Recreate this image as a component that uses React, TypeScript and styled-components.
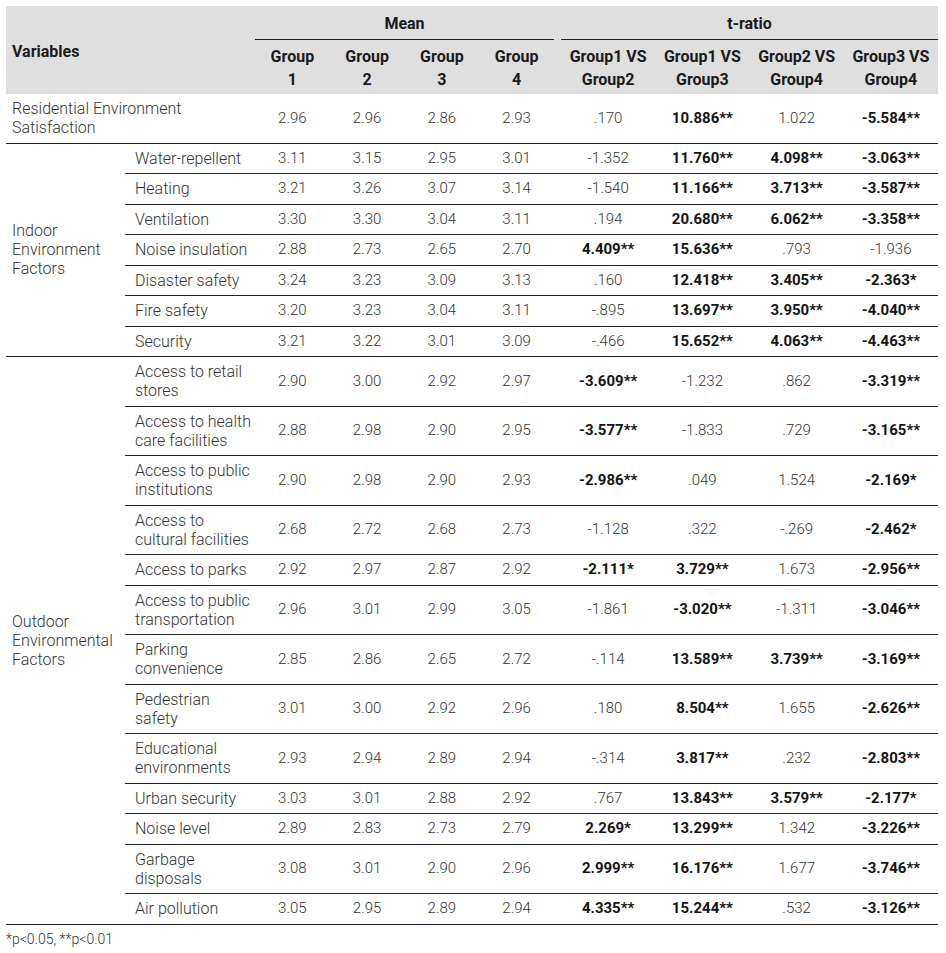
import React from 'react';
import styled, { createGlobalStyle } from 'styled-components';

const Global = createGlobalStyle`
  html, body { margin: 0; padding: 0; background: #ffffff; }
  body { font-family: Roboto, "Noto Sans", Arial, sans-serif; }
`;

const Page = styled.div`
  padding: 6px 0 0 6px;
  width: 932px;
`;

const Table = styled.table`
  border-collapse: collapse;
  table-layout: fixed;
  width: 932px;
  font-family: Roboto, "Noto Sans", Arial, sans-serif;
  font-size: 15px;
  color: #333333;
`;

const Col = styled.col<{ $w: number }>`
  width: ${p => p.$w}px;
`;

const HeadCell = styled.th<{ $left?: boolean }>`
  background: #dfdfdf;
  color: #1a1a1a;
  font-weight: 700;
  font-size: 16px;
  line-height: 23px;
  padding: 5px 2px 3px;
  text-align: ${p => (p.$left ? 'left' : 'center')};
  padding-left: ${p => (p.$left ? '6px' : '2px')};
  vertical-align: middle;
`;

const SpanTitle = styled(HeadCell)`
  padding: 6px 2px 4px;
  line-height: 23px;
  border-bottom: 1px solid #222222;
`;

const GapHead = styled.th`
  background: #dfdfdf;
  padding: 0;
`;

const Cell = styled.td<{ $bold?: boolean }>`
  padding: 5.25px 2px;
  line-height: 19px;
  text-align: center;
  vertical-align: middle;
  border-bottom: 1px solid #222222;
  font-size: 15px;
  font-weight: ${p => (p.$bold ? 700 : 300)};
  color: ${p => (p.$bold ? '#141414' : '#333333')};
  white-space: nowrap;
`;

const LabelCell = styled.td<{ $indent?: boolean }>`
  padding: 5.25px 2px 5.25px ${p => (p.$indent ? '10px' : '6px')};
  line-height: 19px;
  font-size: 16px;
  text-align: left;
  vertical-align: middle;
  border-bottom: 1px solid #222222;
  font-weight: 300;
  color: #333333;
  white-space: nowrap;
`;

const GapCell = styled.td`
  padding: 0;
  border-bottom: 1px solid #222222;
`;

const Note = styled.div`
  margin-top: 6px;
  font-family: Roboto, "Noto Sans", Arial, sans-serif;
  font-size: 14px;
  line-height: 16px;
  font-weight: 300;
  color: #333333;
`;

type Val = [string, boolean?];
type Row = { label: string[]; mean: string[]; t: Val[] };

const B = (v: string): Val => [v, true];
const N = (v: string): Val => [v, false];

const residential: Row = {
  label: ['Residential Environment', 'Satisfaction'],
  mean: ['2.96', '2.96', '2.86', '2.93'],
  t: [N('.170'), B('10.886**'), N('1.022'), B('-5.584**')],
};

const indoor: Row[] = [
  { label: ['Water-repellent'], mean: ['3.11', '3.15', '2.95', '3.01'], t: [N('-1.352'), B('11.760**'), B('4.098**'), B('-3.063**')] },
  { label: ['Heating'], mean: ['3.21', '3.26', '3.07', '3.14'], t: [N('-1.540'), B('11.166**'), B('3.713**'), B('-3.587**')] },
  { label: ['Ventilation'], mean: ['3.30', '3.30', '3.04', '3.11'], t: [N('.194'), B('20.680**'), B('6.062**'), B('-3.358**')] },
  { label: ['Noise insulation'], mean: ['2.88', '2.73', '2.65', '2.70'], t: [B('4.409**'), B('15.636**'), N('.793'), N('-1.936')] },
  { label: ['Disaster safety'], mean: ['3.24', '3.23', '3.09', '3.13'], t: [N('.160'), B('12.418**'), B('3.405**'), B('-2.363*')] },
  { label: ['Fire safety'], mean: ['3.20', '3.23', '3.04', '3.11'], t: [N('-.895'), B('13.697**'), B('3.950**'), B('-4.040**')] },
  { label: ['Security'], mean: ['3.21', '3.22', '3.01', '3.09'], t: [N('-.466'), B('15.652**'), B('4.063**'), B('-4.463**')] },
];

const outdoor: Row[] = [
  { label: ['Access to retail', 'stores'], mean: ['2.90', '3.00', '2.92', '2.97'], t: [B('-3.609**'), N('-1.232'), N('.862'), B('-3.319**')] },
  { label: ['Access to health', 'care facilities'], mean: ['2.88', '2.98', '2.90', '2.95'], t: [B('-3.577**'), N('-1.833'), N('.729'), B('-3.165**')] },
  { label: ['Access to public', 'institutions'], mean: ['2.90', '2.98', '2.90', '2.93'], t: [B('-2.986**'), N('.049'), N('1.524'), B('-2.169*')] },
  { label: ['Access to', 'cultural facilities'], mean: ['2.68', '2.72', '2.68', '2.73'], t: [N('-1.128'), N('.322'), N('-.269'), B('-2.462*')] },
  { label: ['Access to parks'], mean: ['2.92', '2.97', '2.87', '2.92'], t: [B('-2.111*'), B('3.729**'), N('1.673'), B('-2.956**')] },
  { label: ['Access to public', 'transportation'], mean: ['2.96', '3.01', '2.99', '3.05'], t: [N('-1.861'), B('-3.020**'), N('-1.311'), B('-3.046**')] },
  { label: ['Parking', 'convenience'], mean: ['2.85', '2.86', '2.65', '2.72'], t: [N('-.114'), B('13.589**'), B('3.739**'), B('-3.169**')] },
  { label: ['Pedestrian', 'safety'], mean: ['3.01', '3.00', '2.92', '2.96'], t: [N('.180'), B('8.504**'), N('1.655'), B('-2.626**')] },
  { label: ['Educational', 'environments'], mean: ['2.93', '2.94', '2.89', '2.94'], t: [N('-.314'), B('3.817**'), N('.232'), B('-2.803**')] },
  { label: ['Urban security'], mean: ['3.03', '3.01', '2.88', '2.92'], t: [N('.767'), B('13.843**'), B('3.579**'), B('-2.177*')] },
  { label: ['Noise level'], mean: ['2.89', '2.83', '2.73', '2.79'], t: [B('2.269*'), B('13.299**'), N('1.342'), B('-3.226**')] },
  { label: ['Garbage', 'disposals'], mean: ['3.08', '3.01', '2.90', '2.96'], t: [B('2.999**'), B('16.176**'), N('1.677'), B('-3.746**')] },
  { label: ['Air pollution'], mean: ['3.05', '2.95', '2.89', '2.94'], t: [B('4.335**'), B('15.244**'), N('.532'), B('-3.126**')] },
];

const Lines = ({ lines }: { lines: string[] }) => (
  <>
    {lines.map((l, i) => (
      <React.Fragment key={i}>
        {i > 0 && <br />}
        {l}
      </React.Fragment>
    ))}
  </>
);

const Values = ({ row }: { row: Row }) => (
  <>
    {row.mean.map((m, i) => (
      <Cell key={`m${i}`}>{m}</Cell>
    ))}
    <GapCell />
    {row.t.map(([v, b], i) => (
      <Cell key={`t${i}`} $bold={!!b}>
        {v}
      </Cell>
    ))}
  </>
);

const Group = ({ title, rows }: { title: string[]; rows: Row[] }) => (
  <>
    {rows.map((r, i) => (
      <tr key={i}>
        {i === 0 && (
          <LabelCell rowSpan={rows.length}>
            <Lines lines={title} />
          </LabelCell>
        )}
        <LabelCell $indent>
          <Lines lines={r.label} />
        </LabelCell>
        <Values row={r} />
      </tr>
    ))}
  </>
);

const colWidths = [119, 130, 74.75, 74.75, 74.75, 74.75, 7, 94.25, 94.25, 94.25, 94.25];
const meanCols = ['1', '2', '3', '4'];
const tCols = [
  ['Group1 VS', 'Group2'],
  ['Group1 VS', 'Group3'],
  ['Group2 VS', 'Group4'],
  ['Group3 VS', 'Group4'],
];

export default function App() {
  return (
    <Page>
      <Global />
      <Table>
        <colgroup>
          {colWidths.map((w, i) => (
            <Col key={i} $w={w} />
          ))}
        </colgroup>
        <thead>
          <tr>
            <HeadCell rowSpan={2} colSpan={2} $left>
              Variables
            </HeadCell>
            <SpanTitle colSpan={4}>Mean</SpanTitle>
            <GapHead rowSpan={2} />
            <SpanTitle colSpan={4}>t-ratio</SpanTitle>
          </tr>
          <tr>
            {meanCols.map(c => (
              <HeadCell key={c}>
                Group
                <br />
                {c}
              </HeadCell>
            ))}
            {tCols.map((c, i) => (
              <HeadCell key={i}>
                <Lines lines={c} />
              </HeadCell>
            ))}
          </tr>
        </thead>
        <tbody>
          <tr>
            <LabelCell colSpan={2}>
              <Lines lines={residential.label} />
            </LabelCell>
            <Values row={residential} />
          </tr>
          <Group title={['Indoor', 'Environment', 'Factors']} rows={indoor} />
          <Group title={['Outdoor', 'Environmental', 'Factors']} rows={outdoor} />
        </tbody>
      </Table>
      <Note>*p&lt;0.05, **p&lt;0.01</Note>
    </Page>
  );
}
